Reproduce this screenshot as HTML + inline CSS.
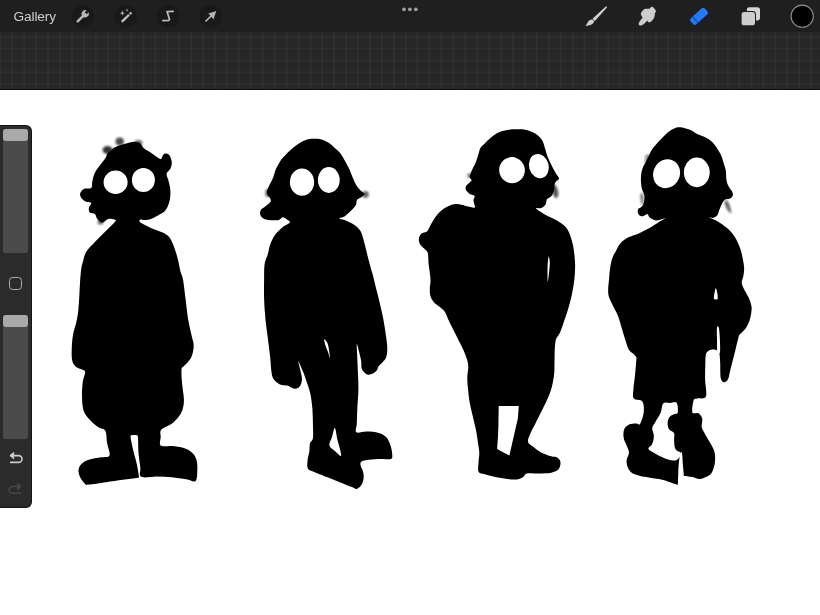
<!DOCTYPE html>
<html><head><meta charset="utf-8"><title>Procreate</title>
<style>
html,body{margin:0;padding:0;}
body{width:820px;height:615px;overflow:hidden;background:#fff;position:relative;font-family:"Liberation Sans",sans-serif;}
.top{position:absolute;left:0;top:0;width:820px;height:90.2px;background-color:#262626;
 background-image:linear-gradient(to right,rgba(255,255,255,.03) 1.5px,transparent 1.5px),linear-gradient(to bottom,rgba(255,255,255,.03) 1.5px,transparent 1.5px);
 background-size:11.93px 11.85px;background-position:-0.6px 0.3px;border-bottom:1.4px solid #101010;box-sizing:border-box;}
.bar{position:absolute;left:0;top:0;width:820px;height:32px;background:#1f1f1f;}
.gal{position:absolute;left:13.4px;top:8.6px;transform:translateZ(0);font-size:13.7px;color:#cdcdcd;letter-spacing:-0.1px;}
.ic{position:absolute;top:5px;width:23px;height:23px;border-radius:50%;background:#171717;}
.art{position:absolute;left:0;top:0;}
.side{position:absolute;left:0;top:126px;width:31px;height:381px;background:#2b2b2b;border-radius:0 5px 5px 0;box-shadow:0 0 0 1px #151515;}
.trk{position:absolute;left:3px;width:25px;background:#4b4b4b;border-radius:2px;}
.hnd{position:absolute;left:3px;width:25px;height:12px;background:#a9a9a9;border-radius:3px;}
.sq{position:absolute;left:9px;top:150.5px;width:11px;height:11px;border:1.6px solid #adadad;border-radius:3.6px;}
</style></head><body>
<div class="top"></div>
<div class="bar"></div>
<div class="gal">Gallery</div>
<svg class="art" width="820" height="34" viewBox="0 0 820 34">
 <g fill="#191919"><circle cx="82.8" cy="16.2" r="11.3"/><circle cx="125.8" cy="16.2" r="11.3"/><circle cx="168.3" cy="16.2" r="11.3"/><circle cx="210.5" cy="16.2" r="11.3"/></g>
 <!-- wrench -->
 <g transform="translate(82.6 16.4) rotate(45)" fill="#b8b8b8">
  <path d="M-1.25 -3 L-1.25 7 A1.25 1.25 0 0 0 1.25 7 L1.25 -3 Z"/>
  <path d="M-1.4 -7.2 L-1.4 -4.4 L1.4 -4.4 L1.4 -7.2 A3.7 3.7 0 0 1 3.6 -3.4 A3.7 3.7 0 0 1 0 0 A3.7 3.7 0 0 1 -3.6 -3.4 A3.7 3.7 0 0 1 -1.4 -7.2 Z"/>
 </g>
 <!-- wand -->
 <g fill="#bdbdbd" stroke="none">
  <path d="M120.9 21 L128.3 13.9 L129.9 15.5 L122.6 22.7 Z"/>
  <path d="M129 13.2 L130.6 11.7 L132.2 13.3 L130.6 14.9 Z"/>
  <path d="M122.4 10.6 L123 12.6 L125 13.2 L123 13.8 L122.4 15.8 L121.8 13.8 L119.8 13.2 L121.8 12.6 Z"/>
  <path d="M127 8.6 L127.4 9.8 L128.6 10.2 L127.4 10.6 L127 11.8 L126.6 10.6 L125.4 10.2 L126.6 9.8 Z"/>
 </g>
 <!-- S selection -->
 <path d="M173.2 11.3 L167 11.6 L169.6 19.4 L168.6 20.4 L162.9 20.6" fill="none" stroke="#bdbdbd" stroke-width="1.7" stroke-linecap="round" stroke-linejoin="round"/>
 <!-- arrow -->
 <path d="M216.3 10.9 L213.5 19.4 L211.5 16.8 L206 22 L204.9 20.9 L210.4 15.6 L208.3 13.4 Z" fill="#b4b4b4"/>
 <!-- dots -->
 <g fill="#9c9c9c"><circle cx="404" cy="9.3" r="1.9"/><circle cx="409.9" cy="9.3" r="1.9"/><circle cx="415.8" cy="9.3" r="1.9"/></g>
 <!-- brush -->
 <path d="M606.1 6.2 L607.1 7.2 L594.9 20.9 L592.5 18.7 Z" fill="#d2d2d2"/>
 <path d="M592.2 19.6 C593.6 20 594.2 21 594 22 C593 24.4 589 26 585.4 25.8 C586.6 24.6 587.2 23.4 587.8 22.2 C588.6 20.6 590.4 19.4 592.2 19.6 Z" fill="#cfcfcf"/>
 <!-- smudge finger -->
 <path d="M638.7 23.8 C638.6 25 639.6 25.8 641 25.5 C642.8 25 644.4 23.4 645.9 21.9 L647.6 20.4 C647.6 21.4 648.4 22.4 649.5 22.3 C651 22.1 652.6 20.4 653.7 18.5 C654.6 16.8 654.9 15 654.8 13.4 L655.9 11.6 L655.7 10.2 L653.4 7.5 L651.6 6.6 L650.2 7.9 L649.3 8.8 L645.7 8.8 C644.6 8.9 643.8 9.3 643.2 9.9 L641.6 12 C640.8 13 640.7 14 641 14.8 C641.4 16 642 16.9 642.7 17.5 L639.6 21.6 C639 22.4 638.7 23.2 638.7 23.8 Z" fill="#cdcdcd"/>
 <!-- eraser -->
 <g transform="translate(699 16.3) rotate(-42)">
  <rect x="-9.6" y="-4.1" width="19.2" height="8.2" rx="2.3" fill="#2279fa"/>
  <rect x="-5.6" y="-4.1" width="1" height="8.2" fill="#0f3f9e"/>
 </g>
 <!-- layers -->
 <rect x="746.8" y="7.2" width="13.2" height="13.2" rx="2.6" fill="#d4d4d4"/>
 <rect x="740.6" y="11.1" width="15.4" height="15.2" rx="3.4" fill="#1f1f1f"/>
 <rect x="741.6" y="12.1" width="13.4" height="13.2" rx="2.6" fill="#cdcdcd"/>
 <!-- color -->
 <circle cx="802.2" cy="16.2" r="11.1" fill="#000" stroke="#8c8c8c" stroke-width="1.1"/>
</svg>
<svg class="art" width="820" height="615" viewBox="0 0 820 615">
<defs><filter id="b" x="-5%" y="-5%" width="110%" height="110%"><feGaussianBlur stdDeviation="0.75"/></filter><filter id="b2" x="-20%" y="-20%" width="140%" height="140%"><feGaussianBlur stdDeviation="0.7"/></filter><filter id="b3" x="-50%" y="-50%" width="200%" height="200%"><feGaussianBlur stdDeviation="1.3"/></filter></defs>
<g filter="url(#b)" fill="#000">
<path d="M119.8 145.2C122.0 144.4 124.7 143.8 127.1 143.2C129.5 142.6 132.2 141.8 134.4 141.8C136.6 141.9 138.7 142.4 140.3 143.5C141.9 144.6 142.2 146.9 144.2 148.6C146.1 150.2 149.3 151.7 152.0 153.4C154.7 155.1 158.7 158.5 160.4 159.0C162.1 159.5 161.6 157.1 162.4 156.2C163.2 155.3 164.0 153.8 165.2 153.6C166.4 153.4 168.3 153.8 169.4 155.2C170.5 156.6 171.7 159.9 171.8 162.2C172.0 164.5 171.2 166.9 170.3 168.8C169.4 170.7 166.9 171.7 166.6 173.6C166.3 175.5 167.7 177.5 168.3 180.0C168.9 182.5 169.9 185.7 170.2 188.6C170.5 191.5 170.5 194.5 170.2 197.3C169.8 200.1 169.1 203.1 168.1 205.5C167.1 207.9 166.0 210.0 164.4 211.6C162.8 213.2 160.5 214.0 158.3 215.2C156.1 216.4 153.2 218.1 151.0 218.9C148.8 219.7 146.7 220.0 144.9 220.1C143.1 220.2 140.7 219.1 140.0 219.5C139.3 219.9 138.9 221.3 140.5 222.6C142.1 223.9 146.2 225.8 149.8 227.4C153.4 229.0 158.8 230.7 162.0 232.3C165.2 233.9 167.3 234.8 169.3 237.2C171.3 239.6 172.7 243.3 174.1 247.0C175.5 250.7 176.7 254.9 177.8 259.1C178.9 263.3 179.7 268.6 180.6 272.0C181.5 275.4 182.2 275.0 183.0 279.5C183.8 284.0 184.8 292.5 185.6 299.0C186.4 305.5 187.0 312.4 188.0 318.5C189.0 324.6 190.7 331.1 191.6 335.6C192.5 340.1 193.7 341.9 193.7 345.4C193.7 348.8 192.7 353.5 191.7 356.3C190.7 359.1 188.9 360.8 187.6 362.4C186.3 364.0 184.9 364.9 183.9 366.1C182.9 367.3 181.8 366.7 181.5 369.8C181.2 372.9 181.8 379.7 182.2 384.6C182.6 389.5 183.8 395.2 183.9 399.3C184.0 403.4 183.5 406.2 182.7 409.0C181.9 411.8 180.8 413.9 179.0 416.3C177.2 418.8 174.7 421.4 171.7 423.7C168.7 425.9 163.0 427.6 161.2 429.8C159.4 432.0 160.8 434.4 160.7 437.0C160.6 439.6 158.9 444.1 160.7 445.6C162.5 447.1 167.8 445.7 171.7 446.1C175.6 446.5 180.4 446.9 183.9 448.0C187.4 449.1 190.3 450.9 192.4 452.9C194.5 454.9 195.8 457.3 196.6 460.2C197.4 463.1 197.5 466.5 197.3 470.0C197.1 473.5 197.4 479.4 195.6 481.0C193.8 482.6 190.3 479.9 186.3 479.3C182.3 478.7 176.6 477.8 171.7 477.3C166.8 476.9 162.2 476.7 157.1 476.6C152.0 476.5 144.0 478.3 141.2 476.8C138.4 475.3 140.8 471.6 140.3 467.6C139.9 463.6 138.9 457.9 138.5 452.9C138.1 447.9 138.3 440.4 138.0 437.5C137.7 434.6 137.6 435.6 136.6 435.2C135.6 434.8 133.0 434.9 132.0 435.2C131.0 435.5 130.4 434.4 130.6 437.0C130.8 439.6 132.2 445.8 133.3 450.5C134.4 455.2 136.1 460.6 137.0 465.1C137.9 469.6 138.9 475.2 139.0 477.3C139.1 479.4 140.3 477.4 137.6 477.8C134.9 478.2 128.2 479.1 122.9 479.8C117.6 480.5 111.6 481.4 105.9 482.2C100.2 483.0 92.3 484.3 88.8 484.6C85.3 484.9 86.5 485.3 85.1 484.1C83.7 482.9 81.3 479.7 80.2 477.3C79.1 474.9 78.3 472.2 78.5 470.0C78.7 467.8 79.8 465.6 81.5 463.9C83.2 462.2 85.5 460.9 88.8 459.8C92.0 458.7 97.5 458.0 101.0 457.3C104.5 456.6 108.5 457.8 109.5 455.4C110.5 453.0 107.8 447.3 107.1 443.2C106.4 439.1 106.8 433.6 105.4 431.0C104.0 428.4 100.9 428.9 98.5 427.3C96.1 425.7 93.4 423.4 91.2 421.2C89.0 419.0 86.5 416.3 85.1 413.9C83.7 411.5 83.2 409.9 82.7 406.6C82.2 403.4 82.0 398.5 82.0 394.4C82.0 390.3 82.2 385.9 82.7 382.2C83.2 378.5 85.1 374.3 85.1 372.2C85.1 370.1 84.1 370.6 82.7 369.8C81.3 369.0 78.3 368.7 76.6 367.3C74.9 365.9 73.2 364.1 72.4 361.2C71.6 358.3 71.6 354.5 71.7 350.2C71.8 345.9 72.1 340.5 72.9 335.6C73.7 330.7 75.7 325.3 76.6 321.0C77.5 316.7 77.9 313.8 78.3 310.0C78.7 306.2 78.9 302.5 79.2 298.0C79.5 293.5 79.7 287.8 80.0 283.0C80.3 278.2 80.7 272.6 81.2 269.0C81.7 265.4 82.2 264.5 83.0 261.6C83.8 258.7 84.3 255.1 86.3 251.8C88.3 248.6 91.9 245.3 94.9 242.1C98.0 238.8 101.5 235.4 104.6 232.3C107.6 229.2 111.4 225.8 113.2 223.8C115.0 221.8 116.4 220.9 115.6 220.1C114.8 219.3 110.5 218.5 108.3 218.9C106.1 219.3 104.0 222.6 102.2 222.6C100.4 222.6 98.5 220.3 97.3 218.9C96.1 217.5 96.1 215.0 94.9 214.0C93.7 213.0 91.0 213.8 90.0 212.8C89.0 211.8 88.6 209.5 88.8 207.9C89.0 206.3 91.6 204.0 91.2 203.0C90.8 202.0 87.9 202.6 86.3 201.8C84.7 201.0 82.5 199.6 81.5 198.2C80.5 196.8 79.8 194.9 80.2 193.3C80.6 191.8 82.1 189.8 83.9 188.9C85.7 188.0 89.8 189.1 91.2 187.9C92.6 186.8 91.8 184.0 92.2 182.0C92.6 180.0 92.9 178.0 93.6 176.0C94.3 174.0 95.1 172.1 96.4 170.0C97.7 167.9 99.9 165.3 101.5 163.2C103.1 161.1 104.8 159.1 105.8 157.5C106.8 155.9 106.5 154.8 107.2 153.8C107.9 152.8 108.7 152.6 109.8 151.6C110.9 150.6 112.2 148.9 113.9 147.8C115.6 146.7 117.6 146.0 119.8 145.2Z"/>
<path d="M313.7 138.8C316.3 138.8 319.0 138.8 321.7 139.6C324.4 140.4 327.3 141.9 329.7 143.5C332.1 145.1 334.1 147.4 336.0 149.1C337.9 150.8 339.2 151.8 340.8 153.9C342.4 156.0 344.1 159.2 345.6 161.9C347.1 164.6 348.4 167.2 349.6 169.8C350.8 172.5 351.6 175.1 352.8 177.8C354.0 180.5 355.2 183.6 356.7 185.8C358.1 188.1 360.2 190.0 361.5 191.3C362.8 192.7 364.4 193.0 364.4 193.9C364.4 194.8 362.7 195.9 361.5 196.9C360.3 197.9 358.0 198.5 357.1 199.8C356.2 201.1 356.8 203.2 355.9 204.9C355.0 206.6 353.2 208.4 352.0 209.7C350.8 211.0 350.1 211.6 348.8 212.8C347.5 214.0 345.6 215.9 344.0 216.8C342.4 217.7 339.1 217.9 339.2 218.4C339.3 218.9 342.1 219.0 344.6 220.1C347.1 221.2 351.8 223.2 354.4 225.0C357.0 226.8 358.9 228.2 360.5 231.1C362.1 233.9 362.9 237.8 364.1 242.1C365.3 246.4 366.7 252.5 367.8 256.7C368.9 260.8 369.7 264.0 370.5 267.0C371.3 270.0 371.7 270.9 372.7 274.6C373.7 278.3 375.1 284.4 376.3 289.3C377.5 294.2 378.9 299.0 380.0 303.9C381.1 308.8 382.3 313.6 383.2 318.5C384.1 323.4 384.9 328.3 385.6 333.2C386.3 338.1 387.2 343.7 387.3 347.8C387.4 351.9 386.9 355.2 386.1 357.6C385.3 360.0 383.6 361.0 382.4 362.4C381.2 363.8 379.8 364.7 378.8 366.1C377.8 367.5 377.7 369.6 376.3 371.0C374.9 372.4 372.0 374.2 370.2 374.6C368.4 375.0 366.8 374.4 365.4 373.4C364.0 372.4 362.4 370.5 361.7 368.5C361.0 366.5 361.6 363.8 361.2 361.2C360.8 358.6 360.0 355.5 359.3 352.7C358.6 349.9 357.1 343.3 356.8 344.1C356.5 344.9 357.1 352.5 357.3 357.6C357.5 362.7 357.8 369.3 358.0 374.6C358.2 379.9 358.5 383.8 358.4 389.5C358.3 395.2 357.6 403.3 357.3 409.0C357.0 414.7 357.0 419.8 356.8 423.7C356.6 427.6 354.7 430.9 356.3 432.2C357.9 433.5 362.9 431.5 366.6 431.6C370.4 431.7 375.5 431.9 378.8 432.9C382.1 433.8 384.4 435.2 386.4 437.3C388.3 439.4 389.5 442.8 390.5 445.6C391.5 448.4 392.1 451.9 392.2 454.1C392.3 456.3 392.8 458.2 391.0 459.0C389.2 459.8 384.9 458.9 381.2 459.0C377.5 459.1 372.2 459.4 369.0 459.8C365.8 460.2 363.1 460.6 361.7 461.5C360.3 462.4 360.3 463.5 360.5 465.1C360.7 466.7 362.4 469.2 362.9 471.2C363.4 473.2 363.9 475.1 363.7 477.3C363.5 479.5 362.8 482.7 361.7 484.6C360.6 486.6 358.4 488.6 356.8 489.0C355.2 489.4 354.8 488.2 352.0 487.1C349.2 486.0 343.9 483.8 339.8 482.2C335.7 480.6 331.7 478.9 327.6 477.3C323.5 475.7 318.7 473.8 315.4 472.4C312.1 471.0 309.3 470.8 308.0 468.8C306.7 466.8 307.4 463.1 307.6 460.2C307.8 457.3 308.9 454.5 309.3 451.7C309.7 448.9 309.4 445.4 310.0 443.2C310.6 441.0 312.4 441.6 312.9 438.3C313.4 435.1 313.0 428.6 312.9 423.7C312.8 418.8 312.8 413.9 312.4 409.0C312.0 404.1 311.4 398.9 310.5 394.4C309.6 389.9 308.0 385.9 306.8 382.2C305.6 378.5 304.6 375.5 303.2 372.0C301.8 368.5 298.8 361.6 298.3 361.2C297.8 360.8 299.6 366.8 300.2 369.8C300.8 372.9 302.1 376.7 302.0 379.5C301.9 382.3 300.7 385.2 299.5 386.8C298.3 388.4 296.2 388.8 294.6 388.8C293.0 388.8 291.0 387.3 289.8 386.8C288.6 386.3 288.9 386.0 287.3 385.6C285.7 385.2 282.2 385.4 280.0 384.4C277.8 383.4 275.3 381.5 273.9 379.5C272.5 377.5 272.1 375.8 271.5 372.2C270.9 368.6 270.8 363.3 270.2 357.6C269.6 351.9 268.6 344.5 267.8 338.0C267.0 331.5 266.0 325.0 265.4 318.5C264.8 312.0 264.3 305.5 264.1 299.0C263.9 292.5 264.0 285.3 264.1 279.5C264.2 273.7 264.0 268.2 264.6 264.0C265.2 259.8 266.9 257.6 267.8 254.3C268.7 251.1 269.0 247.8 270.2 244.5C271.4 241.2 273.1 237.7 275.1 234.8C277.1 232.0 279.9 229.4 282.4 227.4C284.8 225.4 289.1 224.0 289.8 222.6C290.5 221.2 287.8 220.1 286.6 219.2C285.4 218.3 284.0 217.2 282.7 217.3C281.4 217.4 280.7 219.4 278.7 219.9C276.7 220.4 273.2 220.4 270.7 220.2C268.2 219.9 265.2 219.4 263.5 218.4C261.8 217.4 260.6 215.8 260.2 214.4C259.8 213.0 260.0 211.3 260.8 210.0C261.6 208.7 263.5 207.8 265.1 206.5C266.7 205.2 269.5 203.3 270.4 202.0C271.3 200.7 270.8 199.9 270.4 198.8C270.0 197.7 268.4 196.6 267.8 195.3C267.2 194.1 266.8 192.9 267.0 191.3C267.2 189.7 268.1 188.1 269.1 185.8C270.1 183.6 272.0 180.5 273.1 177.8C274.2 175.1 274.5 172.5 275.6 169.8C276.7 167.2 278.5 164.0 279.8 161.9C281.1 159.8 281.8 159.0 283.5 157.1C285.2 155.2 287.4 152.8 289.8 150.7C292.2 148.6 295.1 146.1 297.8 144.3C300.5 142.5 303.2 140.8 305.8 139.9C308.4 139.0 311.1 138.9 313.7 138.8Z"/>
<path d="M516.9 129.2C520.1 129.2 523.3 129.1 526.5 129.9C529.7 130.7 533.4 132.2 536.0 134.0C538.6 135.8 540.9 138.2 542.4 140.7C543.9 143.1 544.2 146.0 545.1 148.7C546.0 151.3 546.4 153.7 547.5 156.6C548.6 159.5 550.5 163.3 552.0 166.2C553.5 169.1 555.2 172.1 556.4 174.2C557.6 176.3 559.2 177.3 559.1 178.6C559.0 179.9 556.6 180.7 555.8 181.8C555.0 182.9 554.8 183.8 554.5 185.3C554.2 186.8 554.5 189.0 553.9 190.9C553.3 192.8 552.2 195.1 551.0 196.5C549.8 197.9 547.8 198.0 546.9 199.3C546.0 200.6 546.6 202.9 545.6 204.4C544.6 205.9 542.7 207.4 541.1 208.1C539.5 208.8 535.5 207.3 536.0 208.3C536.5 209.3 540.5 212.0 543.9 213.9C547.2 215.8 552.4 217.8 556.1 220.0C559.8 222.2 563.5 224.5 565.9 227.3C568.3 230.2 569.4 233.4 570.7 237.1C572.0 240.8 573.0 244.7 573.7 249.3C574.4 253.9 575.0 259.6 575.1 264.6C575.2 269.6 574.9 274.4 574.4 279.3C573.9 284.2 573.0 289.0 572.0 293.9C571.0 298.8 569.7 303.6 568.3 308.5C566.9 313.4 564.8 319.1 563.4 323.2C562.0 327.3 561.0 330.3 559.8 332.9C558.6 335.5 556.9 336.6 556.1 339.0C555.3 341.4 555.2 343.7 554.9 347.6C554.6 351.5 554.6 357.7 554.5 362.2C554.4 366.7 554.6 370.1 554.1 374.6C553.6 379.1 552.5 384.8 551.2 389.3C549.9 393.8 547.9 397.9 546.3 401.5C544.7 405.1 543.3 407.6 541.5 411.2C539.7 414.8 537.2 419.7 535.4 423.4C533.6 427.1 531.7 430.1 530.5 433.2C529.3 436.2 527.6 439.5 528.0 441.7C528.4 443.9 530.6 444.8 532.9 446.6C535.1 448.4 538.5 451.1 541.5 452.7C544.5 454.3 548.6 455.5 551.2 456.3C553.8 457.1 555.8 456.6 557.3 457.6C558.8 458.6 560.3 460.4 560.5 462.4C560.7 464.3 560.0 467.6 558.5 469.3C557.0 471.0 554.5 472.0 551.2 472.7C548.0 473.4 543.1 473.3 539.0 473.4C534.9 473.5 529.4 472.8 526.8 473.4C524.2 474.0 524.8 476.1 523.2 477.1C521.6 478.1 519.8 479.2 517.1 479.5C514.5 479.8 511.0 479.4 507.3 479.0C503.6 478.6 499.0 477.9 495.1 477.1C491.2 476.3 486.9 475.0 484.1 474.1C481.3 473.2 479.4 473.6 478.5 471.7C477.6 469.8 478.4 465.6 478.5 462.4C478.6 459.2 479.4 455.9 479.3 452.7C479.2 449.4 478.5 446.6 478.0 442.9C477.5 439.2 477.0 435.2 476.1 430.7C475.2 426.2 473.8 421.0 472.7 416.1C471.6 411.2 470.3 406.4 469.5 401.5C468.7 396.6 468.2 390.9 467.8 386.8C467.4 382.7 467.2 380.1 467.3 376.8C467.4 373.5 468.3 369.9 468.3 367.1C468.3 364.3 467.9 362.7 467.1 359.8C466.3 356.9 464.8 353.3 463.4 350.0C462.0 346.7 460.1 343.4 458.5 340.2C456.9 336.9 455.3 333.8 453.7 330.5C452.1 327.2 450.2 323.8 448.8 320.7C447.4 317.6 446.5 314.4 445.1 312.2C443.7 310.0 442.0 308.9 440.2 307.3C438.4 305.7 435.7 304.2 434.1 302.4C432.5 300.6 431.2 298.5 430.5 296.3C429.8 294.1 429.8 291.8 429.8 289.0C429.8 286.2 430.7 283.4 430.5 279.3C430.3 275.2 429.1 268.5 428.7 264.6C428.3 260.7 428.4 258.1 428.2 256.0C428.0 253.9 428.1 253.2 427.4 252.0C426.7 250.8 425.4 249.9 424.2 248.6C423.0 247.3 420.9 245.9 420.0 244.2C419.1 242.5 418.6 240.3 418.9 238.5C419.1 236.7 420.2 234.7 421.5 233.6C422.8 232.5 425.3 232.6 426.5 231.8C427.7 231.0 427.7 230.5 428.6 229.0C429.5 227.5 430.2 225.4 431.7 222.9C433.2 220.4 435.4 216.5 437.8 213.9C440.2 211.3 443.2 208.9 446.3 207.3C449.4 205.7 452.8 204.3 456.1 204.1C459.4 203.9 462.8 205.3 465.9 205.9C469.0 206.5 473.1 207.9 474.5 207.6C475.9 207.3 474.4 205.3 474.2 204.0C474.0 202.7 473.4 201.0 473.5 199.7C473.6 198.4 475.2 196.9 474.6 196.0C474.0 195.1 471.3 195.1 469.9 194.1C468.5 193.1 466.6 191.4 466.0 190.1C465.4 188.8 465.5 187.4 466.0 186.2C466.5 185.0 468.2 183.9 469.1 182.9C470.0 181.9 471.5 181.2 471.6 180.2C471.7 179.1 469.5 178.4 469.6 176.6C469.7 174.8 471.3 171.7 472.3 169.4C473.3 167.1 474.5 165.4 475.5 163.0C476.5 160.6 477.4 157.5 478.2 155.0C479.0 152.5 479.3 150.0 480.3 148.2C481.3 146.3 482.7 145.5 484.3 143.9C485.9 142.3 487.6 140.4 489.8 138.5C492.1 136.6 494.9 134.1 497.8 132.7C500.7 131.3 504.2 130.5 507.4 129.9C510.6 129.3 513.7 129.2 516.9 129.2Z"/>
<path d="M680.2 127.3C682.9 127.5 687.1 128.7 690.0 129.8C692.9 130.9 694.4 132.7 697.3 134.1C700.1 135.5 704.2 136.6 707.1 138.3C710.0 140.0 712.2 141.8 714.4 144.4C716.6 147.0 719.0 151.0 720.5 154.1C722.0 157.2 722.7 160.3 723.6 163.0C724.5 165.7 725.3 167.7 725.8 170.4C726.3 173.2 726.0 176.9 726.4 179.5C726.8 182.1 727.4 183.9 728.4 186.0C729.4 188.1 731.6 190.3 732.3 191.9C733.0 193.5 733.0 194.7 732.7 195.8C732.4 196.9 731.4 197.8 730.3 198.4C729.1 199.0 727.0 198.7 725.8 199.2C724.6 199.7 724.0 200.5 723.2 201.6C722.4 202.7 721.9 204.1 721.2 205.5C720.6 206.9 719.8 208.7 719.3 210.1C718.8 211.5 718.5 212.9 718.0 214.0C717.5 215.1 716.9 215.9 716.0 216.6C715.1 217.2 713.9 217.7 712.8 217.9C711.7 218.1 708.4 216.8 709.5 217.6C710.6 218.3 716.0 220.4 719.3 222.4C722.5 224.4 726.2 227.0 729.0 229.8C731.8 232.7 734.3 235.8 736.3 239.5C738.3 243.2 740.0 247.6 741.2 251.7C742.4 255.8 743.2 260.8 743.7 263.9C744.2 266.9 744.2 267.9 744.1 270.0C744.0 272.1 743.6 274.7 743.2 276.8C742.8 278.9 741.6 280.6 741.7 282.5C741.8 284.4 742.6 286.0 743.7 288.5C744.8 291.0 747.2 294.6 748.5 297.3C749.8 300.1 750.7 302.7 751.2 305.0C751.7 307.3 751.8 308.4 751.5 311.0C751.2 313.6 750.5 317.8 749.5 320.7C748.5 323.6 747.2 326.2 745.6 328.5C744.0 330.8 740.9 333.1 739.8 334.4C738.7 335.7 739.4 334.0 738.8 336.3C738.1 338.6 736.9 344.1 735.9 348.0C734.9 351.9 733.9 355.9 732.9 359.8C731.9 363.7 730.8 368.2 730.0 371.5C729.2 374.8 729.0 377.5 728.0 379.3C727.0 381.1 725.3 382.4 724.1 382.2C722.9 382.0 721.4 381.4 720.8 378.3C720.1 375.2 720.4 367.8 720.2 363.7C720.0 359.6 719.8 356.0 719.5 354.0C719.2 352.0 719.1 352.2 718.5 351.5C717.9 350.8 717.0 350.3 716.0 350.0C715.0 349.7 713.7 349.5 712.5 349.6C711.3 349.7 710.0 349.9 709.0 350.4C708.0 350.9 707.1 351.8 706.5 352.8C705.9 353.8 705.8 355.0 705.6 356.5C705.4 358.0 705.5 358.2 705.4 362.0C705.3 365.8 705.0 373.7 705.1 379.5C705.2 385.3 707.2 393.4 705.9 396.6C704.6 399.8 699.3 397.9 697.3 398.5C695.3 399.1 694.5 397.9 693.7 400.2C692.9 402.5 691.6 410.2 692.4 412.4C693.2 414.6 696.9 412.2 698.5 413.2C700.1 414.2 701.7 416.2 702.2 418.5C702.7 420.8 701.3 424.7 701.7 427.1C702.1 429.6 703.3 430.8 704.6 433.2C705.9 435.6 707.9 438.6 709.5 441.7C711.1 444.8 713.5 448.1 714.4 451.5C715.3 454.9 715.3 458.9 714.9 462.4C714.5 465.8 713.3 469.8 712.0 472.2C710.7 474.6 709.1 475.5 707.1 476.6C705.1 477.7 702.2 478.9 699.8 479.0C697.3 479.1 695.0 477.6 692.4 477.1C689.8 476.6 685.9 475.8 683.9 475.9C681.9 476.0 681.1 476.1 680.2 477.5C679.3 478.9 681.4 484.2 678.6 484.6C675.8 485.0 668.6 481.2 663.2 480.0C657.8 478.8 651.2 478.2 646.1 477.1C641.0 476.0 635.8 475.0 632.7 473.4C629.7 471.8 628.8 469.5 627.8 467.3C626.8 465.1 626.4 462.4 626.6 460.0C626.8 457.6 629.0 455.1 629.0 452.7C629.0 450.3 627.5 447.8 626.6 445.4C625.7 442.9 624.1 440.6 623.7 438.0C623.3 435.4 623.2 431.7 624.1 429.5C625.0 427.3 627.0 425.6 629.0 424.6C631.0 423.6 634.5 423.5 636.3 423.4C638.1 423.3 638.8 425.7 640.0 423.9C641.2 422.1 643.3 416.1 643.7 412.4C644.1 408.7 644.0 403.8 642.4 401.5C640.8 399.2 635.4 400.5 633.9 398.5C632.4 396.5 633.2 393.3 633.4 389.3C633.6 385.3 634.6 379.5 635.1 374.6C635.6 369.7 636.1 362.9 636.3 360.0C636.5 357.1 636.8 358.4 636.3 357.3C635.8 356.2 634.6 354.9 633.4 353.7C632.2 352.5 630.3 352.2 629.0 350.0C627.7 347.8 626.6 343.9 625.4 340.2C624.2 336.5 622.9 332.1 621.7 328.0C620.5 323.9 619.6 319.9 618.0 315.9C616.4 311.8 613.6 307.4 612.0 303.7C610.4 300.0 608.8 298.0 608.3 293.9C607.8 289.8 608.6 284.2 609.0 279.3C609.4 274.4 610.0 268.5 610.7 264.6C611.4 260.7 612.4 258.1 613.2 256.0C614.0 253.8 614.4 253.8 615.6 251.7C616.8 249.6 618.3 245.6 620.5 243.2C622.7 240.8 626.0 238.7 629.0 237.1C632.0 235.5 635.5 234.8 638.8 233.4C642.0 232.0 645.2 230.3 648.5 228.5C651.8 226.7 655.2 224.2 658.3 222.4C661.3 220.6 666.0 218.2 666.8 217.6C667.6 217.0 665.0 218.3 663.2 218.8C661.4 219.3 658.1 220.7 655.9 220.5C653.7 220.3 651.2 218.7 649.8 217.6C648.4 216.5 648.5 214.1 647.3 213.9C646.1 213.7 643.9 216.3 642.4 216.3C640.9 216.3 639.0 215.1 638.3 213.9C637.6 212.8 637.5 210.6 638.0 209.4C638.5 208.2 640.6 207.9 641.6 206.8C642.6 205.7 643.2 204.9 643.7 203.0C644.2 201.1 644.6 198.0 644.3 195.6C644.0 193.2 642.4 191.2 641.8 188.3C641.2 185.5 640.8 181.8 640.9 178.5C641.0 175.2 641.3 172.1 642.4 168.8C643.5 165.6 645.7 162.2 647.3 159.0C648.9 155.8 650.2 152.4 652.2 149.3C654.2 146.2 656.9 143.5 659.5 140.7C662.1 137.8 665.6 134.2 668.0 132.2C670.4 130.2 672.1 129.3 674.1 128.5C676.1 127.7 677.6 127.1 680.2 127.3Z"/>
</g>
<g filter="url(#b2)" fill="#fff">
<ellipse cx="115.6" cy="182.3" rx="12.0" ry="11.7" transform="rotate(0 115.6 182.3)"/>
<ellipse cx="143.4" cy="180.1" rx="11.5" ry="12.0" transform="rotate(0 143.4 180.1)"/>
<ellipse cx="302.0" cy="182.2" rx="12.1" ry="13.6" transform="rotate(0 302.0 182.2)"/>
<ellipse cx="328.8" cy="180.0" rx="10.9" ry="12.9" transform="rotate(0 328.8 180.0)"/>
<ellipse cx="512.0" cy="170.2" rx="12.8" ry="13.1" transform="rotate(-20 512.0 170.2)"/>
<ellipse cx="538.9" cy="166.1" rx="9.8" ry="12.2" transform="rotate(-15 538.9 166.1)"/>
<ellipse cx="666.6" cy="173.7" rx="13.2" ry="14.7" transform="rotate(25 666.6 173.7)"/>
<ellipse cx="696.8" cy="172.4" rx="12.9" ry="14.8" transform="rotate(0 696.8 172.4)"/>
</g>
<g filter="url(#b)" fill="#fff">
<path d="M324.2 339.2C324.5 338.7 326.6 341.2 327.4 343.0C328.2 344.8 328.6 347.5 329.0 350.0C329.4 352.5 330.2 357.5 330.0 357.8C329.8 358.1 328.7 354.0 328.0 352.0C327.3 350.0 326.2 348.1 325.6 346.0C325.0 343.9 323.9 339.7 324.2 339.2Z"/>
<path d="M334.9 428.0C335.8 428.5 336.4 435.4 337.5 440.0C338.6 444.6 341.6 453.8 341.2 455.6C340.8 457.4 337.0 452.7 335.0 451.0C333.0 449.3 329.8 447.9 329.3 445.6C328.8 443.3 331.1 439.9 332.0 437.0C332.9 434.1 334.0 427.5 334.9 428.0Z"/>
<path d="M498.7 406.0 L518.8 406.0 L517.9 418.2 L514.0 435.2 L509.4 455.4 L503.0 452.3 L497.1 449.0 L498.0 436.0 L498.4 425.9Z"/>
<path d="M548.7 256.5C549.0 256.5 549.7 259.8 549.8 262.0C549.9 264.2 549.6 266.7 549.3 270.0C549.0 273.3 548.1 282.0 547.8 282.0C547.5 282.0 547.5 273.3 547.5 270.0C547.5 266.7 547.7 264.2 547.9 262.0C548.1 259.8 548.4 256.5 548.7 256.5Z"/>
<path d="M663.2 403.4C664.8 401.8 667.8 403.1 670.0 403.0C672.2 402.9 675.3 401.1 676.6 402.7C677.9 404.3 678.2 410.5 677.8 412.4C677.4 414.3 675.5 413.3 674.1 414.1C672.7 414.9 670.4 415.8 669.3 417.3C668.2 418.9 667.6 421.4 667.6 423.4C667.6 425.4 668.2 427.9 669.3 429.5C670.4 431.1 673.3 431.4 674.1 433.2C674.9 435.0 673.9 437.9 674.1 440.5C674.3 443.1 674.2 446.8 675.4 449.0C676.5 451.2 680.8 451.7 681.0 453.5C681.2 455.3 678.8 459.0 676.6 460.0C674.4 461.0 671.5 460.5 668.0 459.5C664.5 458.5 659.1 455.6 655.9 453.9C652.6 452.1 649.1 450.6 648.5 449.0C647.9 447.4 651.3 446.3 652.2 444.1C653.1 441.9 653.9 438.2 653.9 435.6C653.9 433.0 651.9 430.7 652.2 428.3C652.5 425.9 654.5 423.6 655.9 421.0C657.3 418.4 659.5 415.3 660.7 412.4C661.9 409.5 661.7 405.0 663.2 403.4Z"/>
<path d="M680.7 453.2C681.2 452.0 681.6 450.8 682.0 452.8C682.4 454.8 682.6 461.1 682.9 465.0C683.2 468.9 683.7 472.8 683.9 476.5C684.1 480.2 685.2 485.2 684.3 487.0C683.4 488.8 679.5 489.5 678.5 487.0C677.5 484.5 678.2 476.5 678.3 472.0C678.4 467.5 678.8 463.1 679.2 460.0C679.6 456.9 680.2 454.4 680.7 453.2Z"/>
<path d="M715.6 288.4C716.0 287.8 716.3 289.0 716.6 290.0C716.9 291.0 717.3 293.0 717.5 294.5C717.7 296.0 717.9 298.2 717.6 299.0C717.3 299.8 716.2 299.5 715.6 299.4C715.0 299.3 714.1 299.6 713.9 298.6C713.7 297.6 714.1 295.2 714.4 293.5C714.7 291.8 715.2 289.0 715.6 288.4Z"/>
<path d="M717.0 327.4C717.3 325.7 718.4 326.2 718.9 328.0C719.4 329.8 719.6 334.0 719.8 338.0C720.0 342.0 720.4 349.7 720.0 352.0C719.6 354.3 717.9 354.3 717.4 352.0C716.9 349.7 717.1 342.1 717.0 338.0C716.9 333.9 716.7 329.1 717.0 327.4Z"/>
</g>
<g filter="url(#b3)" fill="#000">
<path d="M725.8 199.5 C729.4 202 730.8 208 731.4 213.4 C728.4 212.4 725.8 208 724.4 203Z" opacity=".6"/>
<ellipse cx="119.7" cy="141.6" rx="4.2" ry="4" opacity=".7"/>
<ellipse cx="107.6" cy="150" rx="5" ry="4" opacity=".8"/>
<ellipse cx="138.4" cy="142.8" rx="4" ry="2.8" opacity=".6"/>
<ellipse cx="100.5" cy="222" rx="3" ry="2.6" opacity=".6"/>
<ellipse cx="365.4" cy="194.4" rx="3.4" ry="3.4" opacity=".6"/>
<ellipse cx="267.8" cy="193" rx="2.6" ry="4" opacity=".6"/>
<ellipse cx="555.2" cy="191" rx="3" ry="7" opacity=".65" transform="rotate(-12 556.2 191.5)"/>
<ellipse cx="469.2" cy="175.6" rx="2" ry="2.6" opacity=".5"/>
<path d="M642.6 193 C643.8 197 643.8 202 642.8 206 C640.4 203 640 198 640.6 193.5Z" opacity=".55"/>
<path d="M645.4 155 C648 153.6 650.6 155 651.4 158 C649 160 647 162 644.6 164.4 Z" opacity=".45"/>
</g>
</svg>
<div class="side">
 <div class="trk" style="top:3px;height:124px"></div><div class="hnd" style="top:3px"></div>
 <div class="sq"></div>
 <div class="trk" style="top:189px;height:124px"></div><div class="hnd" style="top:189px"></div>
 <svg width="31" height="381" viewBox="0 126 31 381" style="position:absolute;left:0;top:0">
  <g fill="none" stroke-linecap="round" stroke-linejoin="round" stroke-width="1.6">
   <path d="M10.6 455.6 L18.6 455.6 A3.4 3.4 0 0 1 18.6 462.4 L10.6 462.4" stroke="#cdcdcd"/>
   <path d="M13.4 452.6 L10 455.6 L13.4 458.6 Z" stroke="#cdcdcd" fill="#cdcdcd" stroke-width="1"/>
   <path d="M20.6 486.5 L12.6 486.5 A3.4 3.4 0 0 0 12.6 493.3 L20.6 493.3" stroke="#474747"/>
   <path d="M17.8 483.5 L21.2 486.5 L17.8 489.5 Z" stroke="#474747" fill="#474747" stroke-width="1"/>
  </g>
 </svg>
</div>
</body></html>
